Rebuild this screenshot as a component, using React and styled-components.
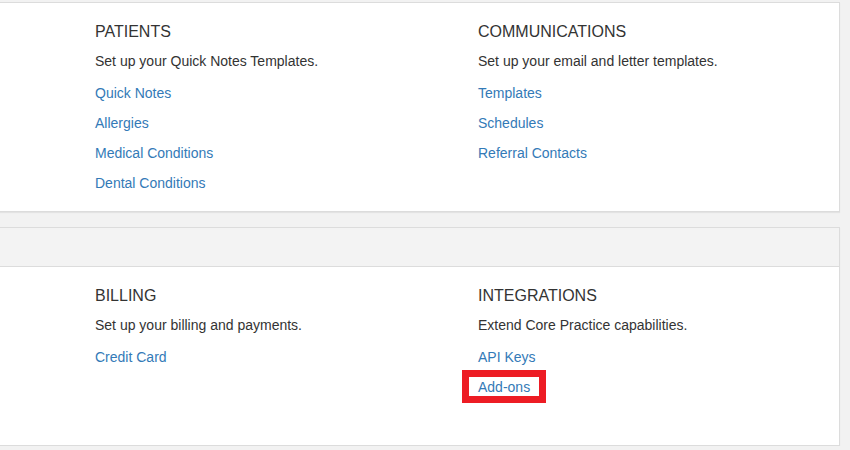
import React from "react";
import styled, { createGlobalStyle } from "styled-components";

const Global = createGlobalStyle`
  body { margin: 0; background: #f2f2f2; font-family: "Liberation Sans", Arial, sans-serif; }
`;
const Page = styled.div`
  padding-top: 2px; display: flex; flex-direction: column; gap: 15px; width: 841px; margin-left: -1px;
`;
const Card = styled.div`
  background: #fff; border: 1px solid #dcdcdc; border-left: none; box-shadow: 0 1px 1px rgba(0,0,0,0.06);
`;
const CardHead = styled.div`
  height: 38px; background: #f3f3f3; border-bottom: 1px solid #dcdcdc;
`;
const Body = styled.div`
  display: grid; grid-template-columns: 383px 1fr; padding: 20px 0 0 96px; height: ${p => p.h}px; box-sizing: border-box;
`;
const Col = styled.div`display: flex; flex-direction: column;`;
const Title = styled.div`font-size: 16px; line-height: 18px; color: #333; text-transform: uppercase;`;
const Desc = styled.div`font-size: 14px; line-height: 18px; color: #333; margin-top: 11px; margin-bottom: 8px;`;
const Link = styled.a`
  font-size: 14px; line-height: 30px; color: #337ab7; text-decoration: none; position: relative; align-self: flex-start;
  ${p => p.marked && `
    &::after { content: ""; position: absolute; left: -16px; right: -16px; top: -2px; bottom: -1px; border: 7px solid #ed1c24; }
  `}
`;

const Section = ({ title, desc, links, marked }) => (
  <Col>
    <Title>{title}</Title>
    <Desc>{desc}</Desc>
    {links.map(l => <Link key={l} marked={l === marked ? 1 : 0}>{l}</Link>)}
  </Col>
);

export default function App() {
  return (
    <Page>
      <Global />
      <Card>
        <Body h={208}>
          <Section title="Patients" desc="Set up your Quick Notes Templates." links={["Quick Notes", "Allergies", "Medical Conditions", "Dental Conditions"]} />
          <Section title="Communications" desc="Set up your email and letter templates." links={["Templates", "Schedules", "Referral Contacts"]} />
        </Body>
      </Card>
      <Card>
        <CardHead />
        <Body h={178}>
          <Section title="Billing" desc="Set up your billing and payments." links={["Credit Card"]} />
          <Section title="Integrations" desc="Extend Core Practice capabilities." links={["API Keys", "Add-ons"]} marked="Add-ons" />
        </Body>
      </Card>
    </Page>
  );
}
